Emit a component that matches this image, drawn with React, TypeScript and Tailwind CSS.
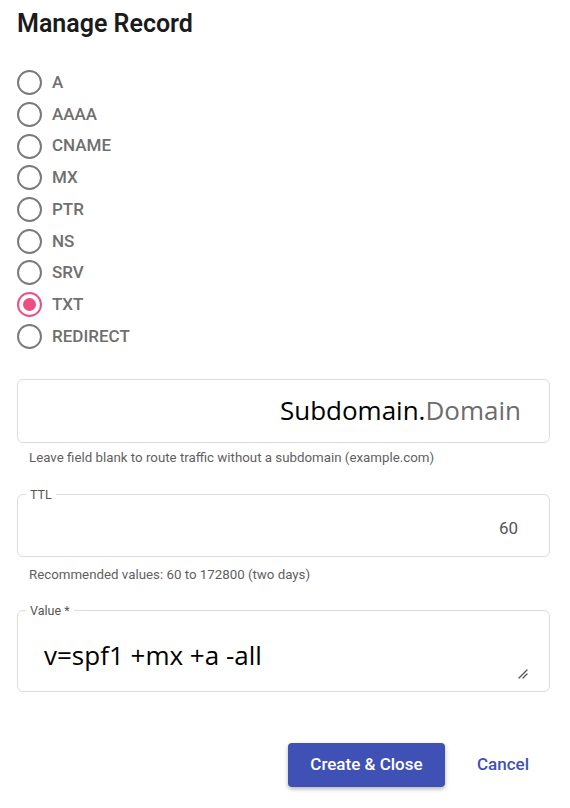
import { useState } from "react";

const recordTypes = ["A", "AAAA", "CNAME", "MX", "PTR", "NS", "SRV", "TXT", "REDIRECT"];

function Radio({ label, checked, onSelect }: { label: string; checked: boolean; onSelect: () => void }) {
  return (
    <label className="flex h-[31.7px] cursor-pointer items-center" onClick={onSelect}>
      <span
        className={
          checked
            ? "flex h-[25px] w-[25px] items-center justify-center rounded-full border-2 border-[#ec4f80]"
            : "flex h-[25px] w-[25px] items-center justify-center rounded-full border-2 border-[#7a7a7a]"
        }
      >
        {checked && <span className="h-[13px] w-[13px] rounded-full bg-[#ec4f80]" />}
      </span>
      <span className="ml-[10px] text-[17px] font-medium text-[#6f6f6f]">{label}</span>
    </label>
  );
}

function ManageRecord() {
  const [type, setType] = useState("TXT");

  return (
    <div className="bg-white pt-[8px] pr-[20px] pb-[20px] pl-[17px] font-['Roboto',sans-serif]">
      <h1 className="text-[25px] leading-[32px] font-semibold text-[#1b1b1b]">Manage Record</h1>

      <div className="mt-[27px] flex flex-col">
        {recordTypes.map((t) => (
          <Radio key={t} label={t} checked={type === t} onSelect={() => setType(t)} />
        ))}
      </div>

      {/* subdomain */}
      <div className="mt-[26.5px] flex h-[64px] items-center justify-end rounded-md border border-[#dcdcdc] pr-[28px]">
        <span className="font-['Open_Sans',sans-serif] text-[26px] text-black">
          Subdomain.<span className="text-[#6c6c6c]">Domain</span>
        </span>
      </div>
      <div className="mt-[7px] pl-[12px] text-[13.3px] leading-[16px] text-[#5f5f5f]">
        Leave field blank to route traffic without a subdomain (example.com)
      </div>

      {/* ttl */}
      <div className="relative mt-[28px] flex h-[63px] items-center justify-end rounded-md border border-[#dcdcdc] pr-[31px]">
        <span className="absolute top-[-8px] left-[8px] bg-white px-[4px] text-[12.5px] leading-[15px] text-[#555]">
          TTL
        </span>
        <span className="pt-[8px] text-[17px] text-[#555]">60</span>
      </div>
      <div className="mt-[10px] pl-[12px] text-[13.3px] leading-[16px] text-[#5f5f5f]">
        Recommended values: 60 to 172800 (two days)
      </div>

      {/* value */}
      <div className="relative mt-[27px] h-[82px] rounded-md border border-[#dcdcdc]">
        <span className="absolute top-[-8px] left-[8px] bg-white px-[4px] text-[12.5px] leading-[15px] text-[#555]">
          Value *
        </span>
        <div className="pt-[27px] pl-[26px] font-['Open_Sans',sans-serif] text-[26px] leading-[34px] text-black">
          v=spf1 +mx +a -all
        </div>
        <svg className="absolute right-[21px] bottom-[12px]" width="10" height="10" viewBox="0 0 10 10">
          <path d="M1 9 L9 1 M5 9 L9 5" stroke="#555" strokeWidth="1.3" strokeLinecap="round" />
        </svg>
      </div>

      <div className="mt-[51px] flex items-center justify-end pr-[21px]">
        <button className="h-[44px] w-[157px] rounded-[4px] bg-[#3f51b5] text-[17px] font-medium text-white shadow-[0_2px_4px_rgba(0,0,0,0.3)]">
          Create &amp; Close
        </button>
        <button className="ml-[32px] text-[17px] font-medium text-[#3f51b5]">Cancel</button>
      </div>
    </div>
  );
}

export default function App() {
  return <ManageRecord />;
}
